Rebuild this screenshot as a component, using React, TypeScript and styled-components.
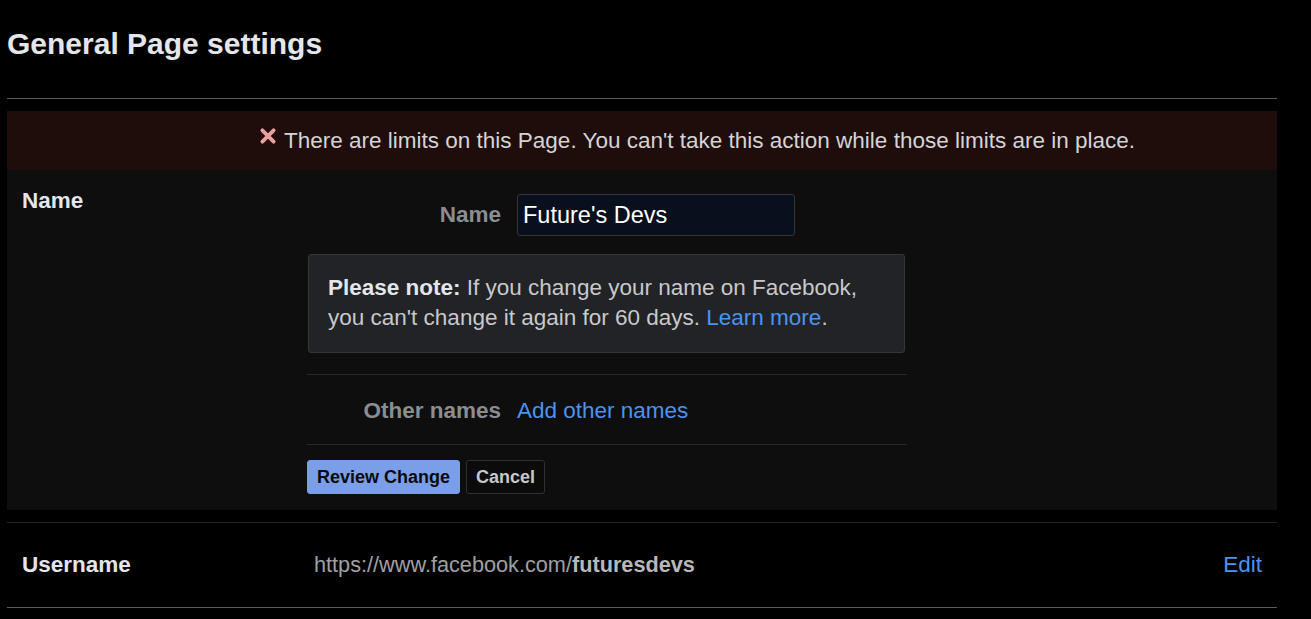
import { createGlobalStyle, styled } from 'styled-components'

const GlobalStyle = createGlobalStyle`
  html, body {
    margin: 0;
    padding: 0;
    background: #000;
  }
  body {
    font-family: "Liberation Sans", Arial, sans-serif;
    color: #e4e6eb;
  }
  * {
    box-sizing: border-box;
  }
`

export default function App() {
  return (
    <>
      <GlobalStyle />
      <Page>
        <Title>General Page settings</Title>
        <Divider />
        <Banner>
          <BannerIcon viewBox="0 0 16 16">
            <path d="M3 3 L13 13 M13 3 L3 13" stroke="#e8a0a0" strokeWidth="3.4" strokeLinecap="round" />
          </BannerIcon>
          There are limits on this Page. You can't take this action while those limits are in place.
        </Banner>
        <NameSection>
          <SectionLabel>Name</SectionLabel>
          <Form>
            <FieldRow>
              <FieldLabel>Name</FieldLabel>
              <TextInput defaultValue="Future's Devs" />
            </FieldRow>
            <Note>
              <b>Please note:</b> If you change your name on Facebook, you can't change it again for 60 days.{' '}
              <Link>Learn more</Link>.
            </Note>
            <FormRule />
            <FieldRow $tall>
              <FieldLabel>Other names</FieldLabel>
              <Link>Add other names</Link>
            </FieldRow>
            <FormRule />
            <Buttons>
              <Button $primary>Review Change</Button>
              <Button>Cancel</Button>
            </Buttons>
          </Form>
        </NameSection>
        <Divider $dim $gap={12} />
        <UsernameRow>
          <SectionLabel>Username</SectionLabel>
          <Url>
            https://www.facebook.com/<b>futuresdevs</b>
          </Url>
          <Link>Edit</Link>
        </UsernameRow>
        <Divider />
      </Page>
    </>
  )
}

const Page = styled.div`
  width: 1270px;
  margin-left: 7px;
`

const Title = styled.h1`
  margin: 0;
  padding-top: 27px;
  height: 98px;
  font-size: 30px;
  font-weight: 700;
  line-height: 34px;
  color: #e4e6eb;
`

const Divider = styled.div<{ $dim?: boolean; $gap?: number }>`
  height: 1px;
  background: ${p => (p.$dim ? '#232323' : '#5a5a5a')};
  margin-top: ${p => p.$gap ?? 0}px;
`

const Banner = styled.div`
  margin-top: 12px;
  height: 59px;
  background: #1f0d0b;
  display: flex;
  align-items: center;
  padding-left: 252px;
  font-size: 22.5px;
  color: #d4d4d4;
`

const BannerIcon = styled.svg`
  width: 18px;
  height: 18px;
  margin-right: 7px;
  margin-top: -9px;
`

const NameSection = styled.div`
  background: #0e0e0e;
  display: flex;
  padding: 18px 0 16px 15px;
`

const SectionLabel = styled.div`
  width: 285px;
  font-size: 22.5px;
  font-weight: 700;
  color: #e4e6eb;
  line-height: 26px;
`

const Form = styled.div`
  width: 600px;
  display: flex;
  flex-direction: column;
`

const FieldRow = styled.div<{ $tall?: boolean }>`
  display: flex;
  align-items: center;
  gap: 16px;
  padding: ${p => (p.$tall ? '23px 0 20px' : '6px 0 0')};
  font-size: 22.5px;
  line-height: 26px;
`

const FieldLabel = styled.div`
  width: 194px;
  text-align: right;
  font-weight: 700;
  color: #8a8d91;
`

const TextInput = styled.input`
  width: 278px;
  height: 42px;
  padding: 0 5px;
  background: #09101d;
  border: 1px solid #33363b;
  border-radius: 3px;
  color: #fff;
  font-family: "Liberation Sans", Arial, sans-serif;
  font-size: 23.5px;
  outline: none;
`

const Note = styled.div`
  margin: 18px 2px 21px 1px;
  padding: 18px 19px 19px;
  background: #212327;
  border: 1px solid #34363a;
  border-radius: 3px;
  font-size: 22.5px;
  line-height: 30px;
  color: #c7c9cc;

  b {
    color: #e4e6eb;
  }
`

const FormRule = styled.div`
  height: 1px;
  background: #2a2a2a;
`

const Link = styled.a`
  color: #4a93f0;
  cursor: pointer;
  font-size: 22.5px;
`

const Buttons = styled.div`
  display: flex;
  gap: 6px;
  margin-top: 15px;
`

const Button = styled.button<{ $primary?: boolean }>`
  height: 34px;
  padding: 0 9px;
  border-radius: 3px;
  border: 1px solid ${p => (p.$primary ? '#7b9ee8' : '#2e3035')};
  background: ${p => (p.$primary ? '#7b9ee8' : '#0b0b0b')};
  color: ${p => (p.$primary ? '#0a0a0a' : '#c8c8c8')};
  font-family: "Liberation Sans", Arial, sans-serif;
  font-size: 18px;
  font-weight: 700;
  cursor: pointer;
`

const UsernameRow = styled.div`
  display: flex;
  align-items: center;
  height: 84px;
  padding: 0 15px 0 15px;

  ${SectionLabel} {
    width: 292px;
  }
`

const Url = styled.div`
  flex: 1;
  font-size: 21.7px;
  color: #a0a0a0;

  b {
    color: #b8b8b8;
  }
`
